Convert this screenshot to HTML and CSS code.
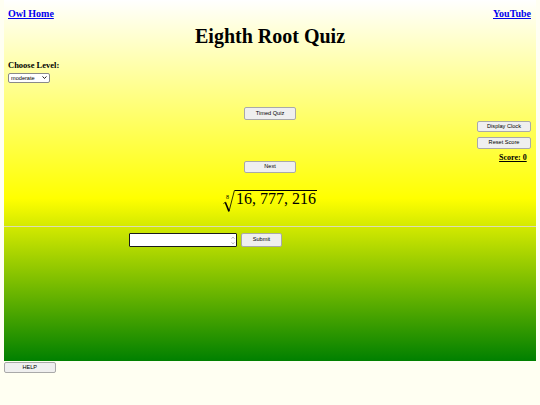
FILE: index.html
```html
<!DOCTYPE html>
<html lang="en">
<head>
    <meta charset="UTF-8">
    <meta name="viewport" content="width=device-width, initial-scale=1.0">
    <title>Eighth Root Quiz</title>
    <link rel="stylesheet" href="styles.css">
</head>
<body>
    <div class="page">
        <div class="links">
            <a href="#">Owl Home</a>
            <a href="#">YouTube</a>
        </div>
        <h1 class="title">Eighth Root Quiz</h1>
        <div class="level">
            <label for="level">Choose Level:</label>
            <div class="pick">
                <select id="level">
                    <option>easy</option>
                    <option selected>moderate</option>
                    <option>hard</option>
                </select>
                <svg class="arrow" width="5" height="3" viewBox="0 0 5 3">
                    <path d="M0.5 0.5 L2.5 2.4 L4.5 0.5" stroke="#000" stroke-width="0.9" fill="none"/>
                </svg>
            </div>
        </div>
        <div class="quiz">
            <div></div>
            <div class="center">
                <button type="button" class="btn wide">Timed Quiz</button>
                <button type="button" class="btn wide next">Next</button>
                <div class="root">
                    <svg class="radical" width="12" height="22" viewBox="0 0 12 22">
                        <path d="M0.4 13.6 L2.4 12.2" stroke="#000" stroke-width="0.7" fill="none"/>
                        <path d="M2.3 12.2 L6 21.4" stroke="#000" stroke-width="1.6" fill="none"/>
                        <path d="M6 21.4 L11.4 0.5 L12 0.5" stroke="#000" stroke-width="0.8" fill="none"/>
                    </svg>
                    <span class="index">8</span>
                    <span class="radicand">16, 777, 216</span>
                </div>
            </div>
            <div class="side">
                <button type="button" class="btn side-btn">Display Clock</button>
                <button type="button" class="btn side-btn reset">Reset Score</button>
                <a href="#" class="score">Score: 0</a>
            </div>
        </div>
        <hr class="divider">
        <div class="answer">
            <div class="field">
                <input type="text" id="answer">
                <svg class="spin" width="4" height="9" viewBox="0 0 4 9">
                    <path d="M0.6 2.6 L2 1.2 L3.4 2.6" stroke="#777" stroke-width="0.6" fill="none"/>
                    <path d="M0.6 6.4 L2 7.8 L3.4 6.4" stroke="#777" stroke-width="0.6" fill="none"/>
                </svg>
            </div>
            <button type="button" class="btn submit">Submit</button>
        </div>
    </div>
    <button type="button" class="btn help">HELP</button>
</body>
</html>
```

FILE: styles.css
```css
body {
    margin: 0;
    background-color: #fffff2;
    font-family: 'Liberation Serif', 'Times New Roman', serif;
}

.page {
    box-sizing: border-box;
    height: 361px;
    margin: 0 4px;
    padding-top: 8px;
    background: linear-gradient(#ffffff 0%, #ffff00 55%, #008000 100%);
}

.links {
    display: flex;
    justify-content: space-between;
    padding: 0 5px 0 4px;
    font-size: 10px;
    line-height: 12px;
    font-weight: 700;
}

.links a {
    color: #0000ee;
}

.title {
    margin: 5px 0 0;
    text-align: center;
    font-size: 20px;
    line-height: 23px;
    color: #000;
}

.level {
    margin-top: 12.4px;
    padding-left: 4px;
}

.level label {
    display: block;
    font-size: 8.5px;
    line-height: 10px;
    font-weight: 700;
}

.pick {
    position: relative;
    width: 42px;
    margin-top: 2.3px;
}

.pick select {
    display: block;
    box-sizing: border-box;
    width: 42px;
    height: 10px;
    padding: 0 0 0 2px;
    font-size: 5.6px;
    font-family: 'Liberation Sans', Arial, sans-serif;
    color: #000;
    border: 1px solid #8a8a8a;
    border-radius: 2px;
    background-color: #fff;
    appearance: none;
    -webkit-appearance: none;
}

.arrow {
    position: absolute;
    right: 3px;
    top: 3.6px;
}

.quiz {
    display: grid;
    grid-template-columns: 1fr auto 1fr;
    margin-top: 24.6px;
}

.center {
    display: flex;
    flex-direction: column;
    align-items: center;
}

.btn {
    box-sizing: border-box;
    padding: 0;
    font-family: 'Liberation Sans', Arial, sans-serif;
    font-size: 5.6px;
    line-height: 1;
    color: #000;
    background-color: #efefef;
    border: 1px solid #a9a9a9;
    border-radius: 2px;
}

.wide {
    width: 52.4px;
    height: 12.7px;
}

.next {
    margin-top: 40.7px;
    height: 12px;
}

.root {
    position: relative;
    display: flex;
    align-items: flex-start;
    margin-top: 17.3px;
}

.radical {
    display: block;
}

.index {
    position: absolute;
    left: 3px;
    top: 4.5px;
    font-size: 6px;
    line-height: 6px;
}

.radicand {
    border-top: 1px solid #000;
    padding: 0 1px;
    font-size: 16px;
    line-height: 16px;
}

.side {
    justify-self: end;
    display: flex;
    flex-direction: column;
    align-items: flex-end;
    padding: 13.4px 5.3px 0 0;
}

.side-btn {
    width: 53.4px;
    height: 11.6px;
}

.reset {
    margin-top: 5px;
    height: 12px;
}

.score {
    margin: 3.5px 4px 0 0;
    font-size: 8px;
    line-height: 9px;
    font-weight: 700;
    color: #000;
}

.divider {
    margin: 13.7px 0 0;
    height: 0;
    border: 0;
    border-top: 1px solid #dcdcb4;
}

.answer {
    display: flex;
    align-items: center;
    margin-top: 6.6px;
    padding-left: 125px;
}

.field {
    position: relative;
}

.field input {
    display: block;
    box-sizing: border-box;
    width: 108.3px;
    height: 14px;
    margin: 0;
    border: 1.5px solid #1a1a1a;
    border-radius: 1px;
    background-color: #fff;
}

.spin {
    position: absolute;
    right: 2.5px;
    top: 2.5px;
}

.submit {
    width: 41.6px;
    height: 14px;
    margin-left: 3.4px;
}

.help {
    display: block;
    margin: 0.7px 0 0 3.5px;
    width: 52.4px;
    height: 11.6px;
}
```
